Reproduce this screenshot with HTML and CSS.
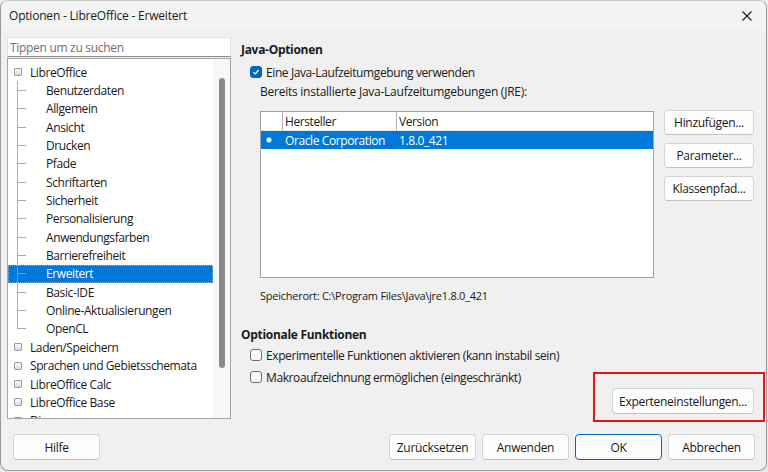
FILE: index.html
```html
<!DOCTYPE html>
<html lang="de">
<head>
  <meta charset="UTF-8">
  <title>Optionen - LibreOffice - Erweitert</title>
  <link rel="stylesheet" href="styles.css">
</head>
<body>
  <div class="window">
    <div class="titlebar">
      <span class="title">Optionen - LibreOffice - Erweitert</span>
      <span class="close">
        <svg width="10" height="10" viewBox="0 0 10 10"><path d="M0.5 0.5 L9.5 9.5 M9.5 0.5 L0.5 9.5" stroke="#1b1b1b" stroke-width="1.1" fill="none"/></svg>
      </span>
    </div>

    <div class="main">
      <div class="sidebar">
        <input class="search" type="text" placeholder="Tippen um zu suchen">
        <div class="tree">
          <div class="rows">
            <div class="row top"><span class="expander"></span><span class="label">LibreOffice</span></div>
            <div class="row child"><span class="branch"></span><span class="label">Benutzerdaten</span></div>
            <div class="row child"><span class="branch"></span><span class="label">Allgemein</span></div>
            <div class="row child"><span class="branch"></span><span class="label">Ansicht</span></div>
            <div class="row child"><span class="branch"></span><span class="label">Drucken</span></div>
            <div class="row child"><span class="branch"></span><span class="label">Pfade</span></div>
            <div class="row child"><span class="branch"></span><span class="label">Schriftarten</span></div>
            <div class="row child"><span class="branch"></span><span class="label">Sicherheit</span></div>
            <div class="row child"><span class="branch"></span><span class="label">Personalisierung</span></div>
            <div class="row child"><span class="branch"></span><span class="label">Anwendungsfarben</span></div>
            <div class="row child"><span class="branch"></span><span class="label">Barrierefreiheit</span></div>
            <div class="row child selected"><span class="branch"></span><span class="label">Erweitert</span></div>
            <div class="row child"><span class="branch"></span><span class="label">Basic-IDE</span></div>
            <div class="row child"><span class="branch"></span><span class="label">Online-Aktualisierungen</span></div>
            <div class="row child last"><span class="branch"></span><span class="label">OpenCL</span></div>
            <div class="row top"><span class="expander"></span><span class="label">Laden/Speichern</span></div>
            <div class="row top"><span class="expander"></span><span class="label">Sprachen und Gebietsschemata</span></div>
            <div class="row top"><span class="expander"></span><span class="label">LibreOffice Calc</span></div>
            <div class="row top"><span class="expander"></span><span class="label">LibreOffice Base</span></div>
            <div class="row top"><span class="expander"></span><span class="label">Diagramme</span></div>
          </div>
          <div class="scrollbar"><div class="thumb"></div></div>
        </div>
      </div>

      <div class="page">
        <div class="heading">Java-Optionen</div>
        <label class="check"><span class="box checked">
          <svg width="8" height="8" viewBox="0 0 8 8"><path d="M1.3 4.2 L3.2 6 L6.7 2" stroke="#fff" stroke-width="1.2" fill="none"/></svg>
        </span>Eine Java-Laufzeitumgebung verwenden</label>
        <div class="caption">Bereits installierte Java-Laufzeitumgebungen (JRE):</div>

        <div class="jre">
          <div class="grid">
            <div class="cell head"></div>
            <div class="cell head">Hersteller</div>
            <div class="cell head last">Version</div>
            <div class="cell sel"><span class="radio"></span></div>
            <div class="cell sel">Oracle Corporation</div>
            <div class="cell sel">1.8.0_421</div>
          </div>
          <div class="side-btns">
            <button class="btn">Hinzufügen...</button>
            <button class="btn">Parameter...</button>
            <button class="btn">Klassenpfad...</button>
          </div>
        </div>

        <div class="location">Speicherort: C:\Program Files\Java\jre1.8.0_421</div>

        <div class="heading second">Optionale Funktionen</div>
        <label class="check"><span class="box"></span>Experimentelle Funktionen aktivieren (kann instabil sein)</label>
        <label class="check macro"><span class="box"></span>Makroaufzeichnung ermöglichen (eingeschränkt)</label>

        <div class="expert">
          <button class="btn wide">Experteneinstellungen...</button>
        </div>
      </div>
    </div>

    <div class="footer">
      <button class="btn">Hilfe</button>
      <div class="spacer"></div>
      <button class="btn">Zurücksetzen</button>
      <button class="btn">Anwenden</button>
      <button class="btn default">OK</button>
      <button class="btn">Abbrechen</button>
    </div>

    <div class="marker"></div>
  </div>
</body>
</html>
```

FILE: styles.css
```css
body {
  margin: 0;
  background: #e9e9e9;
  font-family: "Open Sans", "Noto Sans", sans-serif;
  font-size: 12px;
  letter-spacing: -0.4px;
  color: #1a1a1a;
}

.window {
  position: relative;
  width: 767px;
  height: 471px;
  box-sizing: border-box;
  border: 1px solid #9a9a9a;
  border-top-color: #c8c8c8;
  border-radius: 8px;
  background: #f0f0f0;
  overflow: hidden;
  display: flex;
  flex-direction: column;
}

.titlebar {
  height: 29px;
  background: #f3f3f3;
  display: flex;
  align-items: center;
  padding: 0 10px 0 8px;
}
.title {
  flex: 1;
  letter-spacing: -0.2px;
}
.close {
  display: flex;
  margin-right: 4px;
}

.main {
  display: flex;
  padding: 7px 0 0 6px;
}

/* left column: search + tree */
.sidebar {
  width: 224px;
  display: flex;
  flex-direction: column;
}
.search {
  height: 20px;
  margin: 0;
  box-sizing: border-box;
  border: 1px solid #e2e2e2;
  border-bottom-color: #8c8c8c;
  border-radius: 0;
  background: #fff;
  font-family: inherit;
  font-size: 12px;
  letter-spacing: -0.3px;
  padding: 0 2px;
  outline: none;
}
.search::placeholder {
  color: #6e6e6e;
}
.tree {
  margin-top: 1px;
  height: 361px;
  box-sizing: border-box;
  border: 1px solid #a5a5a5;
  background: #fff;
  display: flex;
  overflow: hidden;
}
.rows {
  flex: 1;
  padding-top: 4px;
  min-width: 0;
}
.row {
  height: 18.35px;
  display: flex;
  align-items: stretch;
  white-space: nowrap;
}
.row .label {
  display: flex;
  align-items: center;
}
.row.top .label {
  margin-left: 8px;
}
.row.child .label {
  margin-left: 20px;
}
.expander {
  align-self: center;
  width: 6px;
  height: 6px;
  margin-left: 6px;
  border: 1px solid #9c9c9c;
  border-radius: 1px;
  background: linear-gradient(#fafafa, #dcdcdc);
}
.branch {
  width: 8px;
  margin-left: 9px;
  border-left: 1px solid #b0b0b0;
  background: linear-gradient(#a8a8a8, #a8a8a8) no-repeat left center / 8px 1px;
}
.row.last .branch {
  border-left: 0;
  width: 9px;
  background:
    linear-gradient(#b0b0b0, #b0b0b0) no-repeat left top / 1px 50%,
    linear-gradient(#a8a8a8, #a8a8a8) no-repeat left center / 9px 1px;
}
.row.selected {
  background: #0078d7;
  color: #fff;
  outline: 1px dotted #7fb6e6;
  outline-offset: -1px;
}
.row.selected .branch {
  border-left-color: #5a9fdc;
  background: linear-gradient(#5a9fdc, #5a9fdc) no-repeat left center / 8px 1px;
}
.scrollbar {
  width: 17px;
  box-sizing: border-box;
  padding: 19px 5px 50px 6px;
  background: #f7f7f7;
  display: flex;
}
.thumb {
  flex: 1;
  background: #8a8a8a;
  border-radius: 3px;
}

/* right column */
.page {
  flex: 1;
  padding: 5px 12px 0 10px;
  display: flex;
  flex-direction: column;
}
.heading {
  font-weight: bold;
  line-height: 16px;
  letter-spacing: -0.3px;
}
.heading.second {
  margin-top: 23px;
}
.check {
  display: flex;
  align-items: center;
  height: 16px;
  margin: 6px 0 0 9px;
}
.check.macro {
  margin-top: 6px;
}
.heading.second + .check {
  margin-top: 4px;
}
.box {
  width: 12px;
  height: 12px;
  box-sizing: border-box;
  border: 1px solid #6f6f6f;
  border-radius: 3px;
  background: #fbfbfb;
  margin-right: 4px;
  display: flex;
  align-items: center;
  justify-content: center;
}
.box.checked {
  background: #0067c0;
  border-color: #0067c0;
}
.caption {
  line-height: 16px;
  margin: 4px 0 0 19px;
  letter-spacing: -0.25px;
}

.jre {
  display: flex;
  margin: 10px 0 0 19px;
}
.grid {
  width: 394px;
  height: 167px;
  margin-top: 1px;
  box-sizing: border-box;
  border: 1px solid #a0a0a0;
  background: #fff;
  display: grid;
  grid-template-columns: 22px 114px 1fr;
  grid-template-rows: 19px 18px;
  align-content: start;
}
.cell {
  display: flex;
  align-items: center;
  padding-left: 2px;
  white-space: nowrap;
}
.cell.head {
  border-right: 1px solid #b4b4b4;
  border-bottom: 1px solid #e6e6e6;
}
.cell.head.last {
  border-right: 0;
}
.cell.sel {
  background: #0078d7;
  color: #fff;
}
.radio {
  width: 4px;
  height: 4px;
  margin-left: 4px;
  border-radius: 50%;
  background: #fff;
  box-shadow: 0 0 0 1px rgba(255, 255, 255, 0.45);
}
.side-btns {
  margin-left: 10px;
  display: flex;
  flex-direction: column;
  gap: 8px;
}
.side-btns .btn {
  width: 90px;
  height: 25px;
}

.location {
  font-size: 11px;
  line-height: 16px;
  margin: 10px 0 0 19px;
  letter-spacing: -0.25px;
}

.expert {
  display: flex;
  justify-content: flex-end;
  margin-top: 3px;
}

.btn {
  height: 26px;
  box-sizing: border-box;
  border: 1px solid #d4d4d4;
  border-bottom-color: #c2c2c2;
  border-radius: 4px;
  background: #fdfdfd;
  font-family: inherit;
  font-size: 12px;
  color: #1a1a1a;
  padding: 0;
  letter-spacing: -0.3px;
}
.btn.wide {
  width: 142px;
}
.btn.default {
  border-color: #0067c0;
}

.footer {
  margin-top: auto;
  display: flex;
  gap: 6px;
  padding: 0 11px 10px 12px;
}
.footer .btn {
  width: 87px;
}
.footer .spacer {
  flex: 1;
}

/* red highlight round the expert settings button */
.marker {
  position: absolute;
  left: 592px;
  top: 371px;
  width: 172px;
  height: 50px;
  box-sizing: border-box;
  border: 2px solid #e8141c;
}
```
